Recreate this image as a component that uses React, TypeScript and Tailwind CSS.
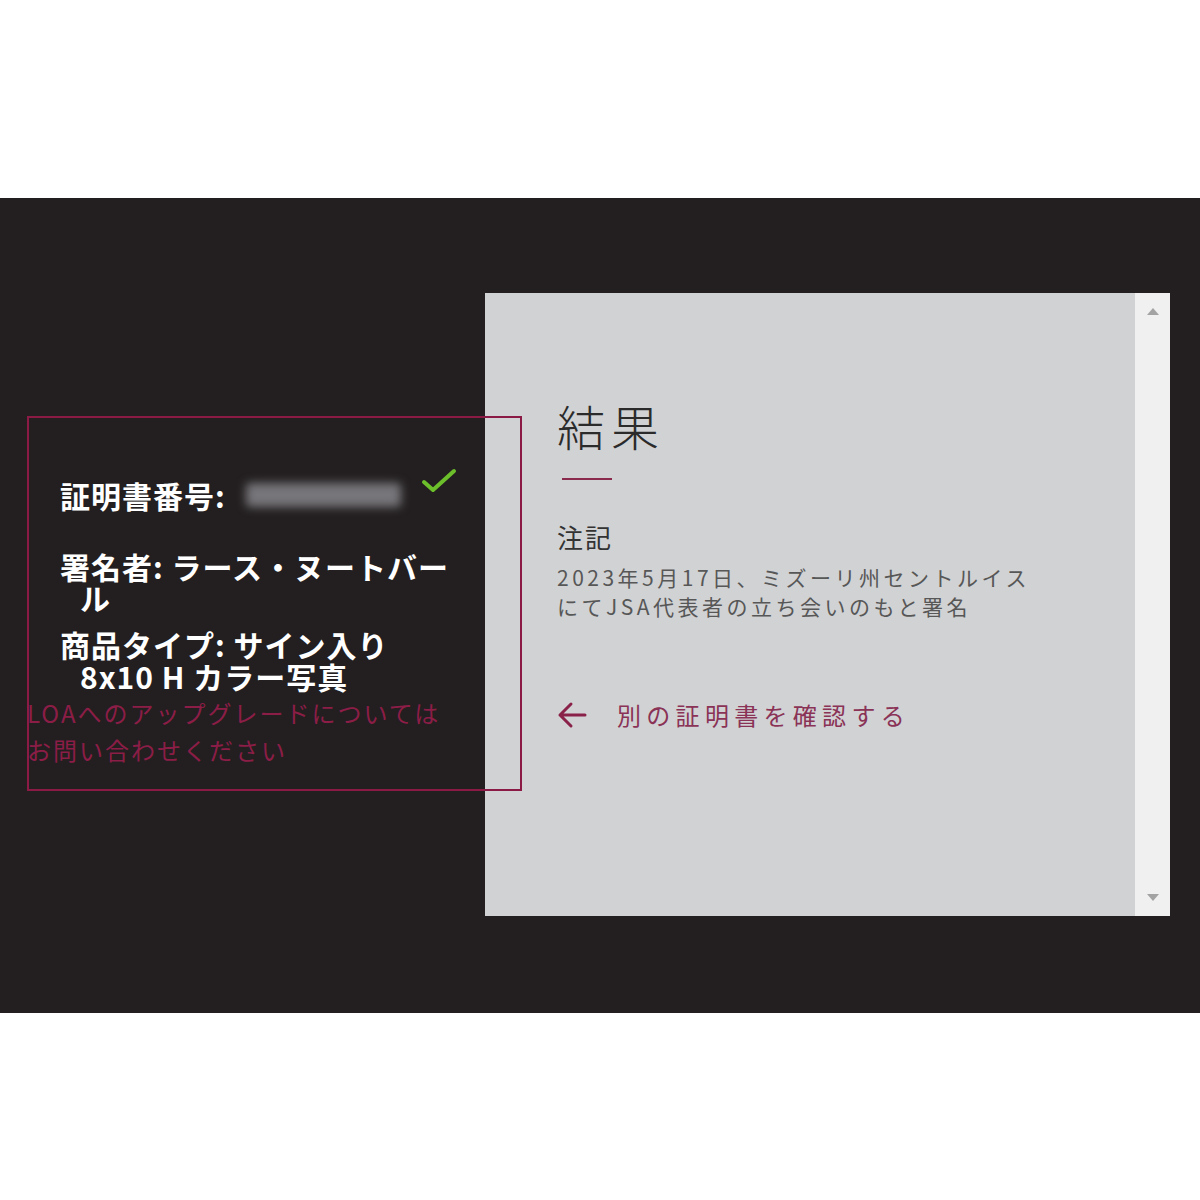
const jp = { fontFamily: '"Noto Sans CJK JP", "Noto Sans", sans-serif' };

function CheckIcon() {
  return (
    <svg width="36" height="28" viewBox="0 0 36 28" className="shrink-0">
      <path d="M3 15 L12 23 L33 4" fill="none" stroke="#6cbf2b" strokeWidth="4" strokeLinecap="round" strokeLinejoin="round" />
    </svg>
  );
}

function ArrowLeft() {
  return (
    <svg width="30" height="28" viewBox="0 0 30 28" className="shrink-0">
      <path d="M28 14 H3 M14 3 L3 14 L14 25" fill="none" stroke="#8a2148" strokeWidth="3" strokeLinecap="round" strokeLinejoin="round" />
    </svg>
  );
}

function Scrollbar() {
  return (
    <div className="flex w-[35px] shrink-0 flex-col items-center justify-between bg-[#f0f0f0] py-[15px]">
      <div className="h-0 w-0 border-x-[6px] border-b-[7px] border-x-transparent border-b-[#a3a3a3]" />
      <div className="h-0 w-0 border-x-[6px] border-t-[7px] border-x-transparent border-t-[#a3a3a3]" />
    </div>
  );
}

function CertificateDetails() {
  return (
    <div className="w-[485px] shrink-0 pl-[60px] pt-[281px] text-white" style={jp}>
      <div className="flex items-start">
        <span className="text-[30px] font-bold leading-[32px] tracking-[1px]">証明書番号:</span>
        <span className="ml-[20px] mt-[4px] inline-block h-[24px] w-[155px] rounded bg-[#77767a] blur-[5px]" />
        <span className="-mt-[12px] ml-[20px]">
          <CheckIcon />
        </span>
      </div>
      <p className="mt-[40px] w-[400px] pl-[20px] -indent-[20px] text-[30px] font-bold leading-[31px] tracking-[1px]">
        署名者: ラース・ヌートバール
      </p>
      <p className="mt-[15px] w-[390px] pl-[20px] -indent-[20px] text-[30px] font-bold leading-[32px] tracking-[1px]">
        商品タイプ: サイン入り 8x10 H カラー写真
      </p>
      <p className="-ml-[33px] mt-[2px] w-[440px] text-[24px] leading-[37px] tracking-[2px] text-[#8b1d47]">
        LOAへのアップグレードについては
        <br />
        お問い合わせください
      </p>
    </div>
  );
}

function ResultPanel() {
  return (
    <div className="mt-[95px] flex h-[623px] w-[685px] shrink-0 bg-[#d1d2d4]" style={jp}>
      <div className="flex-1 pl-[72px] pt-[103px]">
        <h1 className="text-[48px] font-light leading-[58px] tracking-[6px] text-[#2b2b2b]">結果</h1>
        <div className="ml-[5px] mt-[24px] h-[2px] w-[50px] bg-[#8a2a4d]" />
        <h2 className="mt-[40px] text-[26px] leading-[34px] tracking-[2px] text-[#333]">注記</h2>
        <p className="mt-[9px] text-[21px] leading-[29px] tracking-[3.5px] text-[#575757]">
          2023年5月17日、ミズーリ州セントルイス
          <br />
          にてJSA代表者の立ち会いのもと署名
        </p>
        <a className="mt-[78px] flex items-center text-[24px] leading-[32px] tracking-[5.3px] text-[#8a3356]">
          <ArrowLeft />
          <span className="ml-[30px]">別の証明書を確認する</span>
        </a>
      </div>
      <Scrollbar />
    </div>
  );
}

export default function App() {
  return (
    <div className="h-[1200px] w-[1200px] bg-white pt-[198px]">
      <div className="relative flex h-[815px] bg-[#231f20]">
        <CertificateDetails />
        <ResultPanel />
        {/* highlight frame drawn over both columns */}
        <div className="pointer-events-none absolute left-[27px] top-[218px] h-[375px] w-[495px] border-2 border-[#8b1a44]" />
      </div>
    </div>
  );
}
